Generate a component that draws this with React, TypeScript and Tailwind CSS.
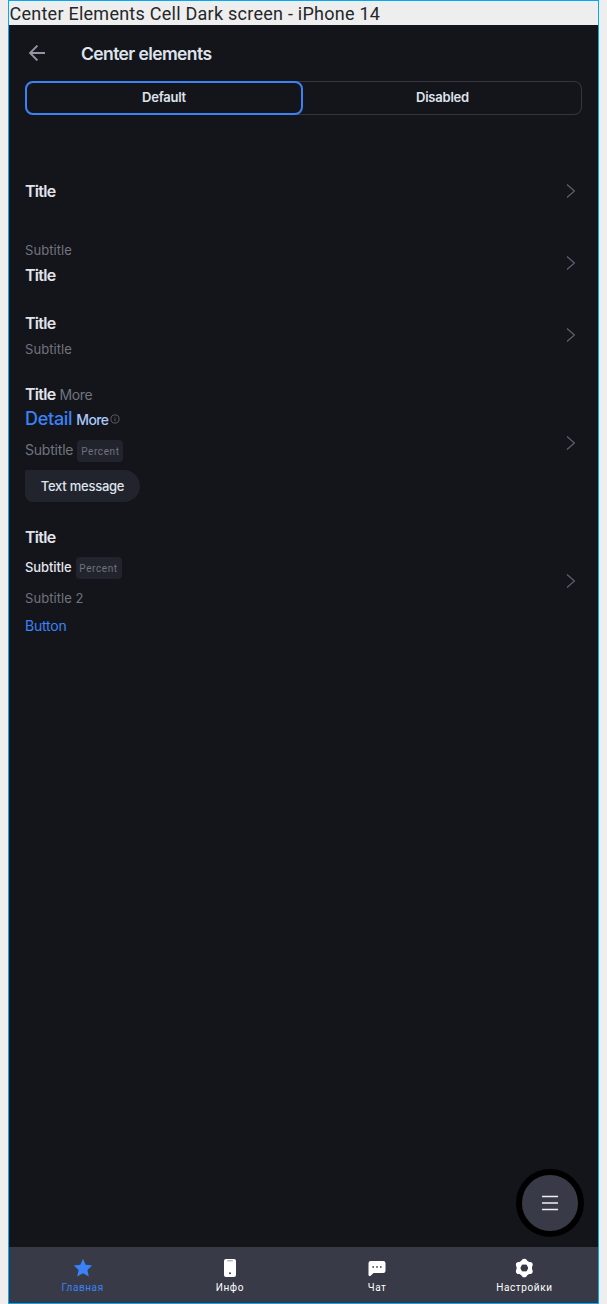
import type { ReactNode } from "react";

const inter = "font-['Inter','Liberation_Sans',sans-serif]";
const roboto = "font-['Roboto','Liberation_Sans',sans-serif]";

function Chevron() {
  return (
    <svg className="ml-auto h-4 w-4 shrink-0" viewBox="0 0 16 16" fill="none" stroke="#5d6170" strokeWidth="1.2">
      <path d="M4 1.5 11.4 8 4 14.5" />
    </svg>
  );
}

function Cell({ className, children }: { className: string; children: ReactNode }) {
  return (
    <div className={`flex items-center pr-[19px] pl-4 ${className}`}>
      <div className="flex h-full flex-col items-start">{children}</div>
      <Chevron />
    </div>
  );
}

function Title() {
  return <span className="text-[16px] leading-6 font-semibold tracking-[-0.7px] text-[#e1e4ec]">Title</span>;
}

function Subtitle({ children }: { children: ReactNode }) {
  return <span className="text-[13px] leading-5 tracking-[0.05px] text-[#70747f]">{children}</span>;
}

function Percent() {
  return (
    <span className={`flex h-[22px] w-[46px] items-center justify-center rounded-[4px] bg-[#22242d] pt-px text-[10px] tracking-[0.6px] text-[#6f727f] ${roboto}`}>
      Percent
    </span>
  );
}

function NavItem({ label, color, children }: { label: string; color: string; children: ReactNode }) {
  return (
    <div className={`flex flex-1 flex-col items-center pt-[11px] ${color}`}>
      <svg className="h-5 w-5" viewBox="0 0 20 20" fill="currentColor">
        {children}
      </svg>
      <span className={`mt-[3px] text-[10px] leading-[14px] tracking-[0.6px] ${roboto}`}>{label}</span>
    </div>
  );
}

export default function App() {
  return (
    <div className={`h-[1304px] w-[607px] bg-[#eeeeee] pl-2 ${inter}`}>
      <div className="flex h-full w-[591px] flex-col border border-[#03a9f4]">
        <div className={`h-6 pl-[0.5px] text-[18px] leading-[26px] tracking-[0.25px] whitespace-nowrap text-[#24262b] ${roboto}`}>
          Center Elements Cell Dark screen - iPhone 14
        </div>
        <main className="relative flex flex-1 flex-col bg-[#14151a]">
          <header className="flex h-14 items-center pl-5">
            <svg className="h-4 w-4" viewBox="0 0 16 16" fill="none" stroke="#9396a2" strokeWidth="1.9">
              <path d="M16 8H1M8.4.6 1 8l7.4 7.4" />
            </svg>
            <h1 className="mt-[2px] ml-9 text-[17.5px] leading-6 font-semibold tracking-[-0.6px] text-[#dfe3ec]">Center elements</h1>
          </header>
          <div className="mx-4 flex h-[34px] rounded-lg shadow-[inset_0_0_0_1px_#33353f] text-[13px] font-semibold tracking-[-0.22px] text-[#dfe3ec]">
            <button className="h-full w-[278px] rounded-lg border-2 border-[#3b82f6] pb-px">Default</button>
            <button className="h-full flex-1 pb-px">Disabled</button>
          </div>
          <div className="mt-10 flex flex-col">
            <Cell className="h-[72px]">
              <div className="flex h-full items-center"><Title /></div>
            </Cell>
            <Cell className="h-[72px]">
              <div className="mt-[13px] flex"><Subtitle>Subtitle</Subtitle></div>
              <div className="mt-[3px] flex"><Title /></div>
            </Cell>
            <Cell className="h-[72px]">
              <div className="mt-3 flex"><Title /></div>
              <div className="mt-1 flex"><Subtitle>Subtitle</Subtitle></div>
            </Cell>
            <Cell className="h-36">
              <div className="mt-[11px] flex h-6 items-baseline gap-1">
                <Title />
                <span className="text-[14px] leading-6 tracking-[-0.4px] text-[#70747f]">More</span>
              </div>
              <div className="mt-px flex h-6 items-baseline">
                <span className="text-[18px] leading-6 font-medium tracking-[-0.3px] text-[#3b82f6]">Detail</span>
                <span className="ml-1 text-[14px] leading-6 font-medium tracking-[-0.6px] text-[#a9c8fb]">More</span>
                <svg className="mt-[7px] ml-px h-[10px] w-[10px] self-start" viewBox="0 0 10 10" fill="none" stroke="#6a6d7b" strokeWidth="0.8">
                  <circle cx="5" cy="5" r="4.1" />
                  <path d="M5 4.5v2.7M5 2.7v.9" />
                </svg>
              </div>
              <div className="mt-[9px] flex h-[22px] items-center gap-1">
                <span className="pb-[3px] text-[14px] leading-5 tracking-[-0.2px] text-[#70747f]">Subtitle</span>
                <Percent />
              </div>
              <div className="mt-2 flex h-8 w-[115px] items-center justify-center rounded-l-lg rounded-tl-[2px] rounded-r-2xl bg-[#22242d] pt-px text-[13px] font-medium tracking-[-0.25px] text-[#dfe3ec]">
                Text message
              </div>
            </Cell>
            <Cell className="h-[132px]">
              <div className="mt-[10px] flex"><Title /></div>
              <div className="mt-2 flex h-[22px] items-center gap-1">
                <span className="pb-[3px] text-[13px] leading-5 font-medium tracking-[-0.1px] text-[#e3e6ee]">Subtitle</span>
                <Percent />
              </div>
              <div className="mt-[9px] flex"><Subtitle>Subtitle 2</Subtitle></div>
              <button className="mt-2 text-[14px] leading-5 tracking-[-0.2px] text-[#3b82f6]">Button</button>
            </Cell>
          </div>
          <button className="absolute right-[14px] bottom-[66px] flex h-[68px] w-[68px] items-center justify-center rounded-full border-[6px] border-black bg-[#383a48]">
            <svg className="h-4 w-4" viewBox="0 0 16 16" fill="none" stroke="#eef0f4" strokeWidth="1.7">
              <path d="M0 1.5h16M0 8h16M0 14.5h16" />
            </svg>
          </button>
          <nav className="mt-auto flex h-14 bg-[#383a48]">
            <NavItem label="Главная" color="text-[#3b82f6]">
              <path d="m10 .8 2.7 6 6.5.7-4.8 4.4 1.4 6.6L10 15.200l-5.800 3.300 1.400-6.600L.8 7.500l6.500-.7z" />
            </NavItem>
            <NavItem label="Инфо" color="text-white">
              <rect x="4" y="1" width="12" height="18" rx="2" />
              <path d="M7.200 2.800h5.600" stroke="#a6a7ad" strokeWidth="1.200" />
              <circle cx="10" cy="15.300" r="1" fill="#383a48" />
            </NavItem>
            <NavItem label="Чат" color="text-white">
              <path d="M3.700 3h12.600a2.200 2.200 0 0 1 2.200 2.200v7.600a2.200 2.200 0 0 1-2.200 2.200H6.600l-3 2.700c-.8.700-2.100.2-2.100-.9V5.200A2.200 2.200 0 0 1 3.700 3z" />
              <path d="M5.400 9h1.600m2.200 0h1.600m2.200 0h1.600" stroke="#383a48" strokeWidth="1.400" />
            </NavItem>
            <NavItem label="Настройки" color="text-white">
              <circle cx="10.300" cy="10" r="5.800" fill="none" stroke="currentColor" strokeWidth="4" />
              <path d="M10.300 3.600v0M15.900 6.800v0M15.900 13.200v0M10.300 16.400v0M4.700 13.200v0M4.700 6.800v0" stroke="currentColor" strokeWidth="5.600" strokeLinecap="round" />
            </NavItem>
          </nav>
        </main>
      </div>
    </div>
  );
}
